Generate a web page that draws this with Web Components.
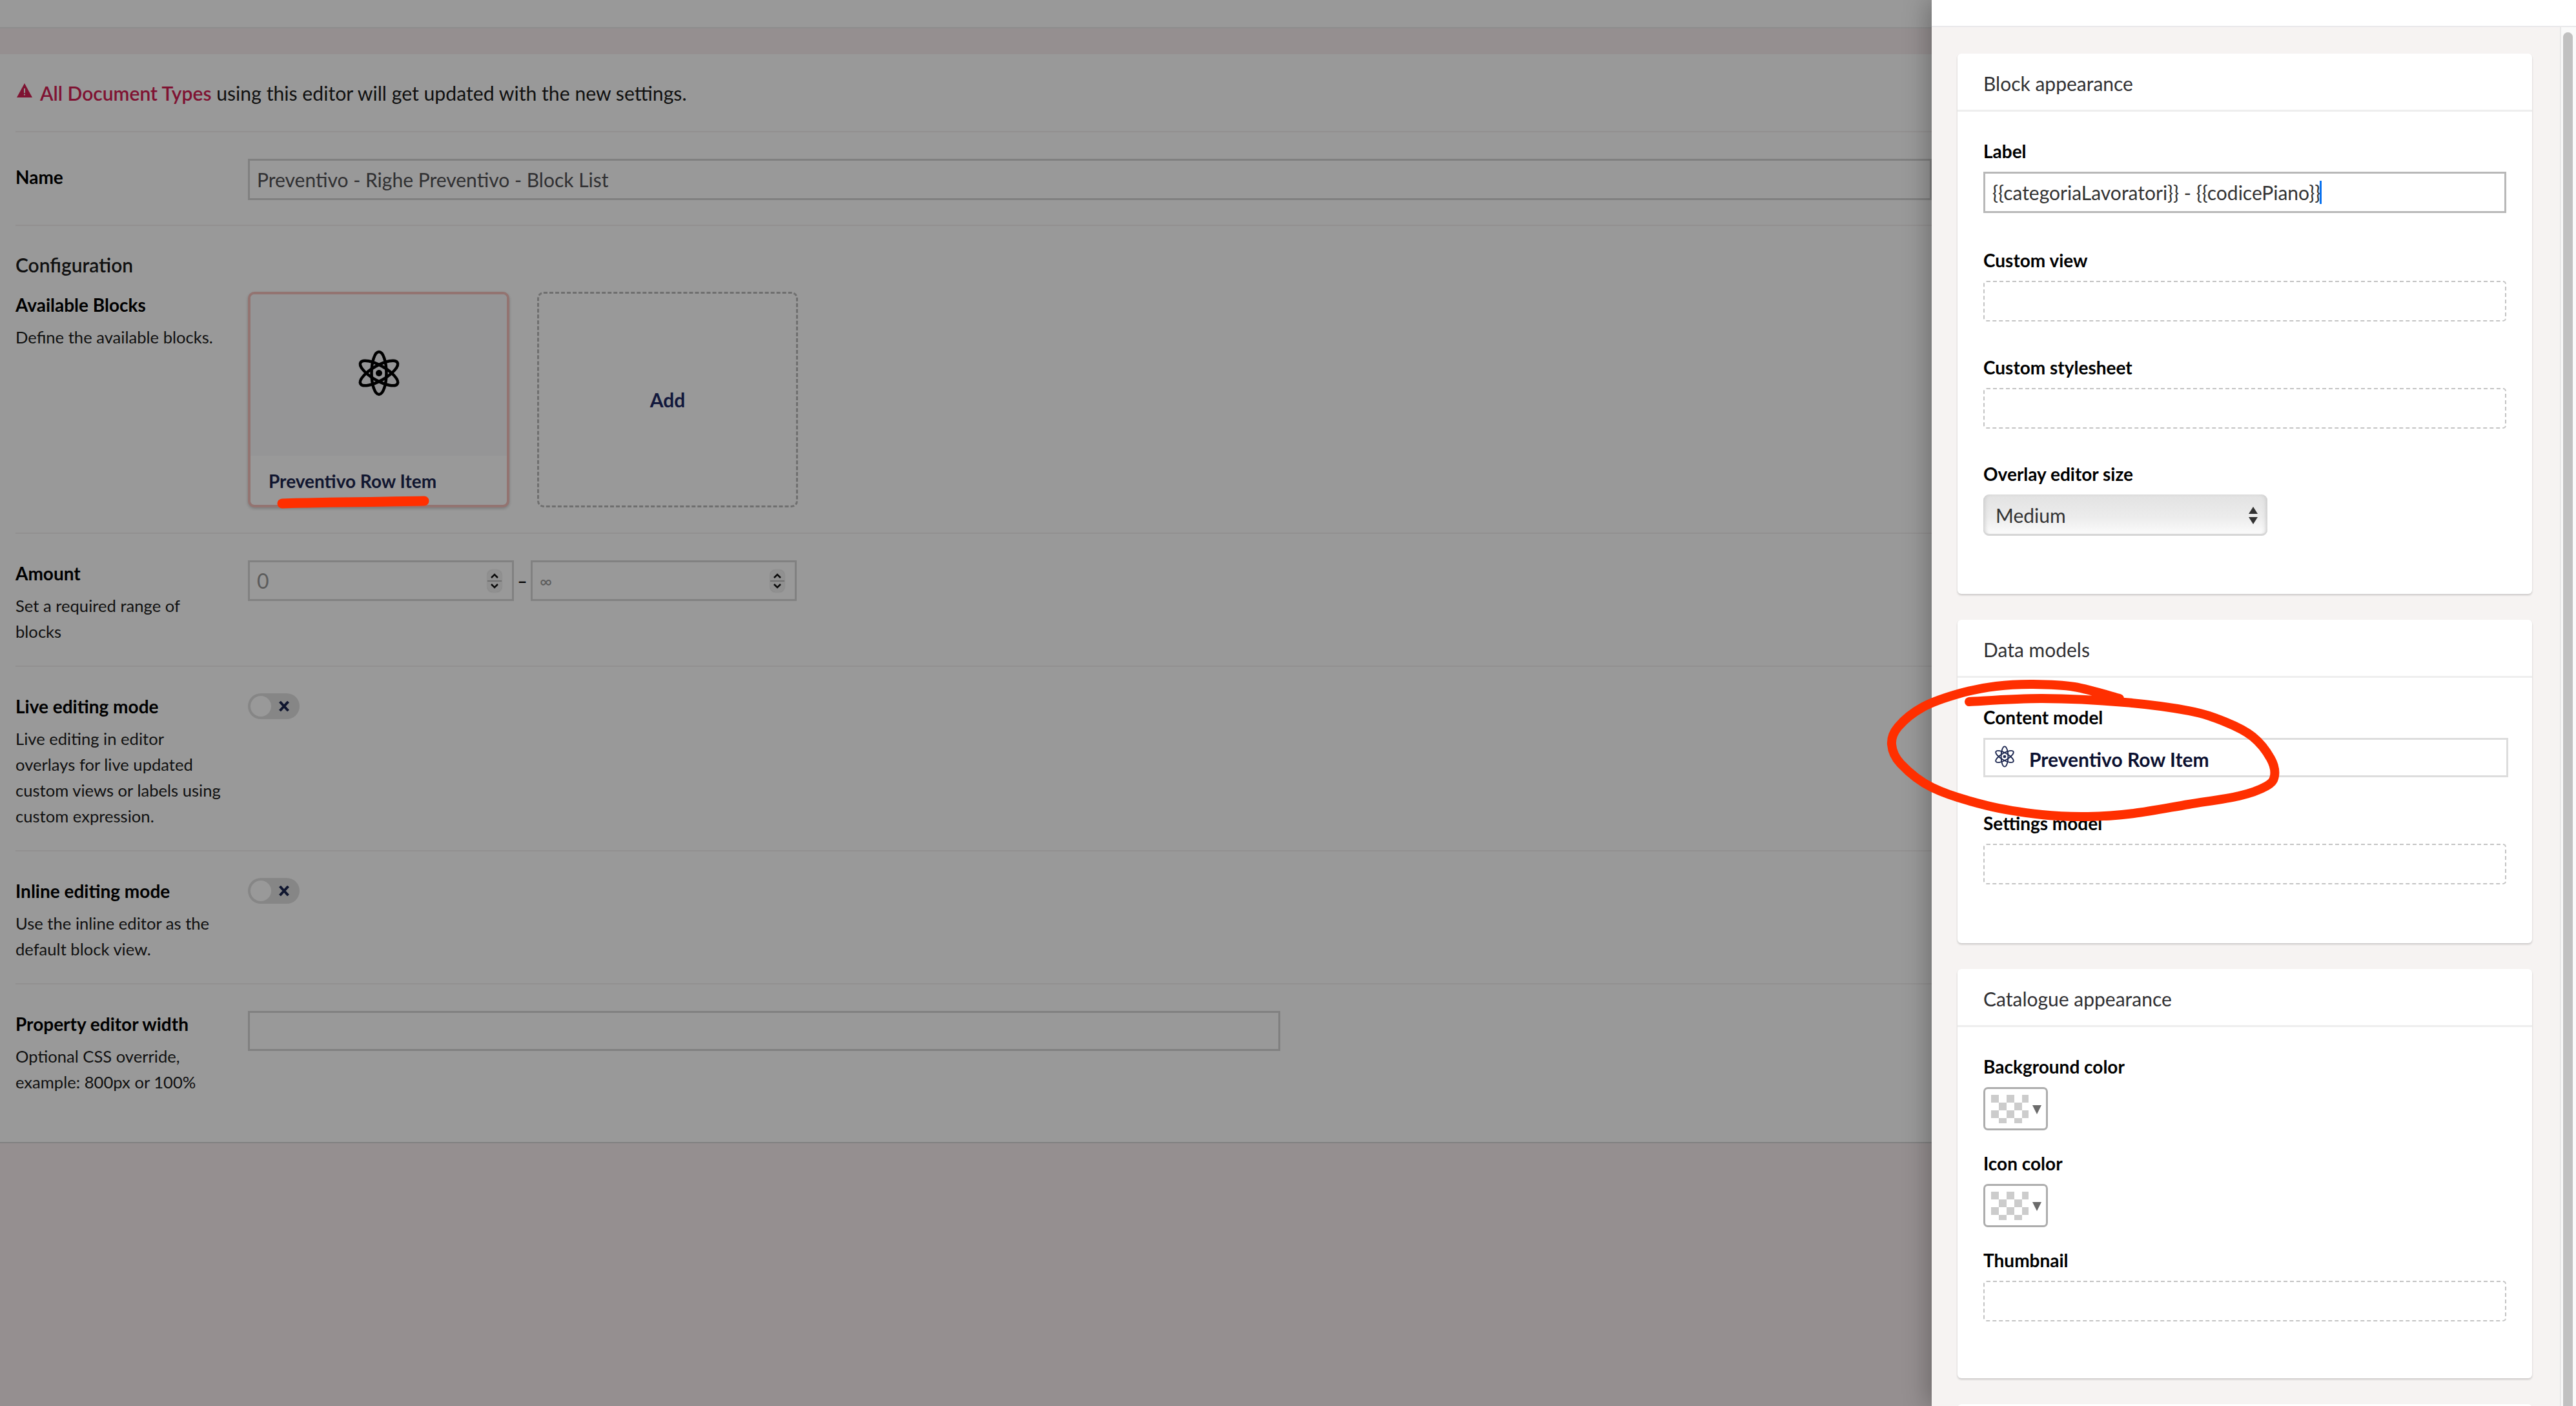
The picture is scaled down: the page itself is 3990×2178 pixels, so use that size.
<!DOCTYPE html>
<html lang="en">
<head>
<meta charset="utf-8">
<title>Block List editor</title>
<style>
    html, body { margin: 0; height: 100%; overflow: hidden; }
    body { font-family: Lato, "Liberation Sans", sans-serif; font-size: 30px; color: #000; }
</style>
</head>
<body>

<bl-app>
    <bl-main slot="main">
        <bl-warning>
            <span slot="types">All Document Types</span> using this editor will get updated with the new settings.
        </bl-warning>

        <bl-property variant="name">
            <span slot="label">Name</span>
            <bl-textbox>Preventivo - Righe Preventivo - Block List</bl-textbox>
        </bl-property>

        <bl-property variant="blocks">
            <span slot="heading">Configuration</span>
            <span slot="label">Available Blocks</span>
            <span slot="desc">Define the available blocks.</span>
            <bl-blocks>
                <bl-block-card>Preventivo Row Item</bl-block-card>
                <bl-add-card>Add</bl-add-card>
            </bl-blocks>
        </bl-property>

        <bl-property>
            <span slot="label">Amount</span>
            <span slot="desc">Set a required range of blocks</span>
            <bl-range>
                <bl-number>0</bl-number>
                <bl-number small>∞</bl-number>
            </bl-range>
        </bl-property>

        <bl-property>
            <span slot="label">Live editing mode</span>
            <span slot="desc">Live editing in editor overlays for live updated custom views or labels using custom expression.</span>
            <bl-toggle></bl-toggle>
        </bl-property>

        <bl-property>
            <span slot="label">Inline editing mode</span>
            <span slot="desc">Use the inline editor as the default block view.</span>
            <bl-toggle></bl-toggle>
        </bl-property>

        <bl-property last>
            <span slot="label">Property editor width</span>
            <span slot="desc">Optional CSS override, example: 800px or 100%</span>
            <bl-textbox short></bl-textbox>
        </bl-property>
    </bl-main>

    <bl-panel slot="panel">
        <bl-card>
            <span slot="title">Block appearance</span>
            <bl-field gap="55">
                <span slot="label">Label</span>
                <bl-textbox focused>{{categoriaLavoratori}} - {{codicePiano}}<bl-caret></bl-caret></bl-textbox>
            </bl-field>
            <bl-field>
                <span slot="label">Custom view</span>
                <bl-picker></bl-picker>
            </bl-field>
            <bl-field gap="52">
                <span slot="label">Custom stylesheet</span>
                <bl-picker></bl-picker>
            </bl-field>
            <bl-field gap="0">
                <span slot="label">Overlay editor size</span>
                <bl-select>Medium</bl-select>
            </bl-field>
        </bl-card>

        <bl-card>
            <span slot="title">Data models</span>
            <bl-field gap="53">
                <span slot="label">Content model</span>
                <bl-model>Preventivo Row Item</bl-model>
            </bl-field>
            <bl-field gap="1">
                <span slot="label">Settings model</span>
                <bl-picker></bl-picker>
            </bl-field>
        </bl-card>

        <bl-card>
            <span slot="title">Catalogue appearance</span>
            <bl-field gap="33">
                <span slot="label">Background color</span>
                <bl-swatch></bl-swatch>
            </bl-field>
            <bl-field gap="33">
                <span slot="label">Icon color</span>
                <bl-swatch></bl-swatch>
            </bl-field>
            <bl-field gap="-2">
                <span slot="label">Thumbnail</span>
                <bl-picker></bl-picker>
            </bl-field>
        </bl-card>

        <bl-card></bl-card>
    </bl-panel>

    <bl-scribble slot="marks"></bl-scribble>
</bl-app>

<script>
    // Shared atom icon, used on the block card and in the content model picker
    const atomSvg = (size, color, stroke) => `
        <svg width="${size}" height="${size}" viewBox="-36 -36 72 72" fill="none" stroke="${color}" stroke-width="${stroke}">
            <ellipse rx="11.5" ry="33"/>
            <ellipse rx="11.5" ry="33" transform="rotate(60)"/>
            <ellipse rx="11.5" ry="33" transform="rotate(120)"/>
            <circle r="5" fill="${color}" stroke="none"/>
        </svg>`;

    const define = (tag, html, onConnect) => {
        customElements.define(tag, class extends HTMLElement {
            constructor() {
                super();
                this.attachShadow({ mode: 'open' }).innerHTML = html;
            }
            connectedCallback() {
                if (onConnect) onConnect(this);
            }
        });
    };

    define('bl-app', `
        <style>
            :host { display: flex; width: 3990px; height: 2178px; position: relative; overflow: hidden; }
            ::slotted([slot=main]) { width: 2992px; flex: none; }
            ::slotted([slot=panel]) { width: 998px; flex: none; }
        </style>
        <slot name="main"></slot>
        <slot name="panel"></slot>
        <slot name="marks"></slot>
    `);

    define('bl-main', `
        <style>
            :host { display: block; position: relative; background: #f8eff0; height: 2178px; overflow: hidden; }
            .top { height: 42px; background: #fff; border-bottom: 2px solid #ececec; }
            .band { height: 40px; }
            .sheet { background: #fff; padding-left: 24px; border-bottom: 2px solid #d8d8d8; height: 1687px; box-sizing: border-box; }
            .veil { position: absolute; inset: 0; background: rgba(0, 0, 0, .4); }
        </style>
        <div class="top"></div>
        <div class="band"></div>
        <div class="sheet"><slot></slot></div>
        <div class="veil"></div>
    `);

    define('bl-warning', `
        <style>
            :host { display: flex; align-items: center; height: 121px; padding-top: 1px; border-bottom: 2px solid #f4f1f0; box-sizing: border-box; color: #1b1b1b; font-size: 30.200px; }
            svg { margin: 0 12px 8px 2px; flex: none; }
            ::slotted([slot=types]) { color: #d42054; font-weight: 600; font-size: 30px; }
        </style>
        <svg width="24" height="22" viewBox="0 0 24 22"><path fill="#d42054" d="M12 0 24 22H0Z"/><path fill="#f6f1ef" d="M11 8h2v7h-2zM11 16.500h2v2h-2z"/></svg>
        <span><slot name="types"></slot><slot></slot></span>
    `);

    define('bl-property', `
        <style>
            :host { display: block; border-bottom: 2px solid #f4f1f0; padding: 41px 0 33px; }
            :host([last]) { border-bottom: 0; }
            :host([variant=name]) { padding-bottom: 38px; }
            :host([variant=name]) .label { padding-top: 8px; }
            :host([variant=blocks]) { padding: 40px 0 39px; }
            .heading { font-weight: 600; line-height: 40px; margin-bottom: 22px; color: #1b1b1b; }
            :host(:not([variant=blocks])) .heading { display: none; }
            .row { display: grid; grid-template-columns: 360px 1fr; }
            .label { font-weight: 700; font-size: 28px; line-height: 40px; color: #000; }
            .desc { font-size: 25.600px; line-height: 40px; margin-top: 10px; width: 322px; color: #1b1b1b; }
        </style>
        <div class="heading"><slot name="heading"></slot></div>
        <div class="row">
            <div>
                <div class="label"><slot name="label"></slot></div>
                <div class="desc"><slot name="desc"></slot></div>
            </div>
            <div><slot></slot></div>
        </div>
    `);

    define('bl-textbox', `
        <style>
            :host { display: flex; align-items: center; height: 64px; box-sizing: border-box; border: 3px solid #d6d6d6; padding: 0 11px; color: #515054; background: #fff; white-space: nowrap; }
            :host([short]) { width: 1599px; height: 62px; }
            :host([focused]) { color: #333; border-color: #b8b8b8; }
        </style>
        <slot></slot>
    `);

    define('bl-caret', `
        <style>
            :host { display: inline-block; width: 3px; height: 36px; background: #0a72ef; margin-left: -1px; vertical-align: middle; }
        </style>
    `);

    define('bl-blocks', `
        <style>
            :host { display: flex; gap: 43px; }
        </style>
        <slot></slot>
    `);

    define('bl-block-card', `
        <style>
            :host { display: flex; flex-direction: column; width: 405px; height: 334px; box-sizing: border-box; border: 4px solid #f5c1bc; border-radius: 10px; background: #fff; overflow: hidden; box-shadow: 0 2px 4px rgba(0,0,0,.2); }
            .image { height: 250px; flex: none; display: flex; align-items: center; justify-content: center; background: #f8f8fb; }
            .image svg { margin-top: -6px; }
            .name { padding-left: 28px; margin-top: 21px; font-weight: 700; font-size: 28px; line-height: 36px; color: #1b264f; white-space: nowrap; }
        </style>
        <div class="image">${atomSvg(72, '#000', 4.5)}</div>
        <div class="name"><slot></slot></div>
    `);

    define('bl-add-card', `
        <style>
            :host { display: flex; align-items: center; justify-content: center; width: 404px; height: 334px; box-sizing: border-box; border: 3px dashed #b9b9b9; border-radius: 10px; font-weight: 700; font-size: 30px; color: #1f2a66; }
        </style>
        <slot></slot>
    `);

    define('bl-range', `
        <style>
            :host { display: flex; align-items: center; width: 850px; }
        </style>
        <slot></slot>
    `, el => {
        // separator between the two number boxes
        const dash = document.createElement('span');
        dash.textContent = '–';
        dash.style.cssText = 'width:26px;text-align:center;font-weight:700;font-size:26px;color:#000';
        const first = el.querySelector('bl-number');
        if (first && !el.querySelector('span')) first.after(dash);
    });

    define('bl-number', `
        <style>
            :host { display: flex; align-items: center; justify-content: space-between; width: 412px; height: 63px; box-sizing: border-box; border: 3px solid #d8d8d8; padding: 0 16px 0 11px; color: #999; font-size: 32px; background: #fff; }
            :host([small]) { font-size: 26px; }
            .spin { width: 22px; height: 34px; border-radius: 8px; background: #f1f1f1; box-shadow: 0 0 2px rgba(0,0,0,.25); display: block; }
        </style>
        <span><slot></slot></span>
        <svg class="spin" viewBox="0 0 22 34" fill="none" stroke="#111" stroke-width="2.500">
            <path d="M6 12 11 7l5 5M6 22l5 5 5-5"/>
            <path d="M0 17h22" stroke="#bbb" stroke-width="2"/>
        </svg>
    `);

    define('bl-toggle', `
        <style>
            :host { display: block; position: relative; width: 80px; height: 40px; border-radius: 20px; background: #e0e0e0; }
            .knob { position: absolute; left: 4px; top: 4px; width: 32px; height: 32px; border-radius: 50%; background: #fff; }
            svg { position: absolute; left: 48px; top: 12px; }
        </style>
        <div class="knob"></div>
        <svg width="16" height="16" viewBox="0 0 16 16" stroke="#1b264f" stroke-width="4"><path d="M1.500 1 14.500 15M14.500 1 1.500 15"/></svg>
    `);

    define('bl-panel', `
        <style>
            :host { display: flex; flex-direction: column; height: 2178px; background: #fff; position: relative; box-shadow: -6px 0 36px rgba(0,0,0,.28); }
            .head { height: 42px; flex: none; background: #fff; border-bottom: 2px solid #e9e9eb; box-sizing: border-box; }
            .body { flex: 1; display: flex; background: #f6f3f2; min-height: 0; overflow: hidden; }
            .content { flex: 1; padding: 41px 43px 0 40px; display: flex; flex-direction: column; gap: 40px; min-width: 0; }
            .track { width: 25px; flex: none; box-sizing: border-box; border-left: 2px solid #e8e8e8; background: #fafafa; padding: 8px 5px 0 3px; }
            .thumb { height: 100%; background: #c1c1c1; border-radius: 8px 8px 0 0; }
        </style>
        <div class="head"></div>
        <div class="body">
            <div class="content"><slot></slot></div>
            <div class="track"><div class="thumb"></div></div>
        </div>
    `);

    define('bl-card', `
        <style>
            :host { display: block; background: #fff; border-radius: 6px; box-shadow: 0 2px 3px rgba(0,0,0,.18); flex: none; }
            .title { height: 87px; line-height: 92px; padding-left: 40px; border-bottom: 3px solid #eeeeee; color: #303033; font-size: 30px; }
            .inner { padding: 43px 40px 90px; }
        </style>
        <div class="title"><slot name="title"></slot></div>
        <div class="inner"><slot></slot></div>
    `);

    define('bl-field', `
        <style>
            :host { display: block; }
            .label { font-weight: 700; font-size: 28px; line-height: 36px; margin-bottom: 14px; color: #000; white-space: nowrap; }
        </style>
        <div class="label"><slot name="label"></slot></div>
        <slot></slot>
    `, el => {
        el.style.marginBottom = (el.getAttribute('gap') ?? 53) + 'px';
    });

    define('bl-picker', `
        <style>
            :host { display: block; height: 63px; box-sizing: border-box; border: 2.500px dashed #c4c4c4; border-radius: 5px; }
        </style>
    `);

    define('bl-select', `
        <style>
            :host { display: flex; align-items: center; justify-content: space-between; width: 440px; height: 64px; box-sizing: border-box; padding: 0 15px 0 19px; border-radius: 9px; color: #333; background: linear-gradient(#e2e2e2, #ececec 55%, #f9f9f9 90%); box-shadow: inset 0 -3px 0 #d6d6d6, inset 5px 0 6px -3px #c9c9c9, inset -5px 0 6px -3px #c9c9c9; }
        </style>
        <slot></slot>
        <svg width="14" height="27" viewBox="0 0 14 27" fill="#333"><path d="M7 0 14 11H0ZM7 27 0 16H14Z"/></svg>
    `);

    define('bl-model', `
        <style>
            :host { display: flex; align-items: center; height: 61px; box-sizing: border-box; margin: 0 -3px 0 0; border: 3px solid #ddd; padding-left: 13px; font-weight: 700; font-size: 30px; color: #0b1030; white-space: nowrap; }
            svg { flex: none; margin-right: 21px; margin-top: -4px; }
            span { padding-top: 4px; }
        </style>
        ${atomSvg(34, '#1b264f', 4)}
        <span><slot></slot></span>
    `);

    define('bl-swatch', `
        <style>
            :host { display: block; position: relative; width: 100px; height: 67px; box-sizing: border-box; border: 3px solid #adadad; border-radius: 7px; background: #fff; }
            svg { position: absolute; left: 9px; top: 9px; }
        </style>
        <svg width="79" height="44" viewBox="0 0 79 44" fill="#ccc">
            <path d="M0 0h12v12H0zM24 0h12v12H24zM48 0h10v12H48zM12 12h12v12H12zM36 12h12v12H36zM0 24h12v12H0zM24 24h12v12H24zM48 24h10v12H48zM12 36h12v8H12zM36 36h12v8H36z"/>
            <path fill="#6b6b6b" d="M64 16h14l-7 14Z"/>
        </svg>
    `);

    // Hand drawn annotation: a red loop and underline sitting over the screen
    const loop = [[3050,1087],[3163,1082],[3291,1088],[3390,1101],[3446,1118],[3489,1141],[3517,1175],[3523,1202],[3510,1218],[3468,1233],[3390,1246],[3305,1260],[3234,1265],[3163,1262],[3078,1248],[2993,1220],[2944,1183],[2930,1153],[2940,1126],[2979,1095],[3036,1074],[3092,1063],[3149,1060],[3213,1064],[3283,1082]];
    const smooth = pts => {
        let d = `M${pts[0][0]} ${pts[0][1]}`;
        for (let i = 0; i < pts.length - 1; i++) {
            const a = pts[Math.max(i - 1, 0)], b = pts[i], c = pts[i + 1], e = pts[Math.min(i + 2, pts.length - 1)];
            d += `C${b[0] + (c[0] - a[0]) / 6} ${b[1] + (c[1] - a[1]) / 6} ${c[0] - (e[0] - b[0]) / 6} ${c[1] - (e[1] - b[1]) / 6} ${c[0]} ${c[1]}`;
        }
        return d;
    };

    define('bl-scribble', `
        <style>
            :host { position: absolute; inset: 0; pointer-events: none; }
        </style>
        <svg width="3990" height="2178" viewBox="0 0 3990 2178" fill="none" stroke="#ff2f00" stroke-linecap="round" stroke-linejoin="round">
            <path stroke-width="14" d="${smooth(loop)}"/>
            <path stroke-width="15" d="M437 780 C500 778 600 777 657 776"/>
        </svg>
    `);
</script>
</body>
</html>
